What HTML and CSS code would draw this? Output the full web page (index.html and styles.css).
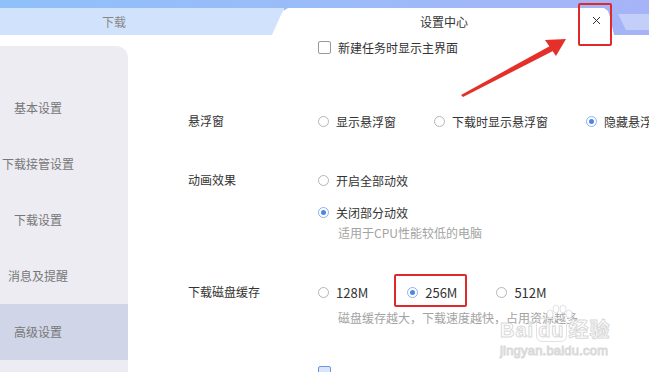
FILE: index.html
```html
<!DOCTYPE html>
<html lang="zh-cn">
<head>
    <meta charset="UTF-8">
    <title>设置中心</title>
    <link rel="stylesheet" href="styles.css">
</head>
<body>
    <div class="titlebar">
        <div class="tab tab-off">下载</div>
        <div class="tab tab-on">
            <span class="tab-title">设置中心</span>
            <span class="btn-close">
                <svg width="9" height="9" viewBox="0 0 9 9"><path d="M1 1L8 8M8 1L1 8" stroke="#333" stroke-width="1"/></svg>
            </span>
        </div>
        <div class="tab tab-next"></div>
    </div>

    <div class="page">
        <div class="sidebar">
            <div class="menu-item">基本设置</div>
            <div class="menu-item">下载接管设置</div>
            <div class="menu-item">下载设置</div>
            <div class="menu-item">消息及提醒</div>
            <div class="menu-item active">高级设置</div>
        </div>

        <div class="main">
            <div class="line line-top">
                <span class="check"></span>
                <span>新建任务时显示主界面</span>
            </div>

            <div class="row row-float">
                <div class="label">悬浮窗</div>
                <div class="options">
                    <div class="line">
                        <span class="opt"><span class="radio"></span>显示悬浮窗</span>
                        <span class="opt"><span class="radio"></span>下载时显示悬浮窗</span>
                        <span class="opt"><span class="radio on"></span>隐藏悬浮窗</span>
                    </div>
                </div>
            </div>

            <div class="row row-anim">
                <div class="label">动画效果</div>
                <div class="options">
                    <div class="line">
                        <span class="opt"><span class="radio"></span>开启全部动效</span>
                    </div>
                    <div class="line line-second">
                        <span class="opt"><span class="radio on"></span>关闭部分动效</span>
                    </div>
                    <div class="hint">适用于CPU性能较低的电脑</div>
                </div>
            </div>

            <div class="row row-cache">
                <div class="label">下载磁盘缓存</div>
                <div class="options">
                    <div class="line line-num">
                        <span class="opt"><span class="radio"></span>128M</span>
                        <span class="opt"><span class="radio on"></span>256M</span>
                        <span class="opt"><span class="radio"></span>512M</span>
                    </div>
                    <div class="hint hint-cache">磁盘缓存越大，下载速度越快，占用资源越多</div>
                </div>
            </div>

            <div class="row row-last">
                <div class="label"></div>
                <div class="options">
                    <div class="line"><span class="check on"></span></div>
                </div>
            </div>
        </div>
    </div>

    <!-- 百度经验水印 -->
    <div class="watermark">
        <svg class="wm-paw" width="30" height="16" viewBox="0 0 30 16">
            <g fill="#fff" stroke="#e2e2e2" stroke-width="1">
                <ellipse cx="6" cy="10" rx="3" ry="4"/>
                <ellipse cx="12" cy="5" rx="3" ry="4"/>
                <ellipse cx="19" cy="5" rx="3" ry="4"/>
                <ellipse cx="25" cy="10" rx="3" ry="4"/>
            </g>
        </svg>
        <div class="wm-logo">Bai<span class="wm-du">du</span>经验</div>
        <div class="wm-url">jingyan.baidu.com</div>
    </div>

    <!-- 红色标注 -->
    <div class="mark mark-close"></div>
    <div class="mark mark-256"></div>
    <svg class="arrow" width="649" height="372" viewBox="0 0 649 372">
        <path d="M461 95 L550 46 L553 51 L463 97 Z" fill="#e5302a"/>
        <path d="M566 39 L545 40 L556 56 Z" fill="#e5302a"/>
    </svg>
</body>
</html>
```

FILE: styles.css
```css
* {
    box-sizing: border-box;
}

body {
    margin: 0;
    width: 649px;
    height: 372px;
    overflow: hidden;
    position: relative;
    background-color: #fff;
    font-family: "Noto Sans CJK SC", "Liberation Sans", sans-serif;
    font-size: 12px;
    color: #333;
}

.titlebar {
    height: 35px;
    padding-top: 8px;
    display: flex;
    align-items: stretch;
    overflow: hidden;
    background: linear-gradient(90deg, #8fc0fa 0%, #9bbcf9 50%, #a6b3f7 100%);
}

.tab {
    display: flex;
    align-items: center;
    flex-shrink: 0;
    line-height: 27px;
}

.tab-off {
    width: 284px;
    padding-right: 56px;
    justify-content: center;
    background-color: #d1e3fc;
    color: #888;
}

.tab-on {
    width: 342px;
    margin-left: -12px;
    position: relative;
    justify-content: center;
    background-color: #fff;
    clip-path: polygon(0 100%, 8px 9px, 11px 3px, 16px 0, calc(100% - 10px) 0, calc(100% - 6px) 3px, calc(100% - 4px) 9px, 100% 100%);
}

.tab-title {
    margin-left: 2px;
}

.btn-close {
    position: absolute;
    right: 13px;
    top: 8px;
    width: 9px;
    height: 9px;
    display: flex;
}

.tab-next {
    width: 40px;
    margin: 6px 0 5px 4px;
    background-color: #c4cff9;
    clip-path: polygon(0 0, 100% 0, 100% 100%, 8px 100%);
}

.page {
    display: flex;
    height: 337px;
}

.sidebar {
    width: 128px;
    margin-top: 11px;
    padding-top: 34px;
    background-color: #ececf2;
    border-top-right-radius: 12px;
}

.menu-item {
    width: 76px;
    height: 56px;
    line-height: 56px;
    text-align: center;
    color: #777;
}

.menu-item.active {
    width: 128px;
    padding-right: 52px;
    background-color: #d0d5e7;
}

.main {
    flex: 1;
    padding-left: 60px;
}

.line {
    display: flex;
    align-items: center;
    height: 20px;
    white-space: nowrap;
}

.line-top {
    margin-top: 2px;
    padding-left: 130px;
}

.line-second {
    margin-top: 12px;
}

.line-num {
    font-size: 13px;
}

.line-num .opt {
    margin-right: 39px;
}

.check {
    width: 13px;
    height: 13px;
    margin-right: 7px;
    border: 1px solid #999;
    border-radius: 2px;
    background-color: #fff;
}

.check.on {
    border-color: #6a96e6;
    background-color: #d9e5fb;
}

.row {
    display: flex;
}

.row-float {
    margin-top: 54px;
}

.row-anim {
    margin-top: 39px;
}

.row-cache {
    margin-top: 39px;
}

.row-last {
    margin-top: 34px;
}

.label {
    width: 130px;
    flex-shrink: 0;
    line-height: 20px;
    color: #333;
}

.options {
    flex: 1;
}

.opt {
    display: flex;
    align-items: center;
    margin-right: 38px;
}

.radio {
    width: 11px;
    height: 11px;
    margin-right: 7px;
    border: 1px solid #b5b5b5;
    border-radius: 50%;
    position: relative;
}

.radio.on {
    border-color: #8fb0ee;
}

.radio.on::after {
    content: "";
    position: absolute;
    left: 2px;
    top: 2px;
    width: 5px;
    height: 5px;
    border-radius: 50%;
    background-color: #4d86e6;
}

.hint {
    padding-left: 20px;
    line-height: 20px;
    color: #a3a3a3;
    margin-top: 1px;
}

.hint-cache {
    margin-top: 6px;
}

.watermark {
    position: absolute;
    left: 500px;
    top: 304px;
    width: 115px;
    color: #fff;
    -webkit-text-stroke: 1px #d9d9d9;
    font-family: "Liberation Sans", "Noto Sans CJK SC", sans-serif;
    font-weight: bold;
    line-height: 1;
}

.wm-paw {
    display: block;
    margin-left: 44px;
}

.wm-logo {
    font-size: 20px;
    letter-spacing: 1px;
}

.wm-du {
    margin: 0 2px;
    padding: 0 1px;
    border: 1px solid #e2e2e2;
    border-radius: 6px;
}

.wm-url {
    margin-top: 4px;
    font-size: 13px;
    font-weight: normal;
    letter-spacing: 0.2px;
}

.mark {
    position: absolute;
    border: 2.5px solid #e0292b;
    border-radius: 2px;
}

.mark-close {
    left: 578px;
    top: 3px;
    width: 34px;
    height: 43px;
}

.mark-256 {
    left: 394px;
    top: 274px;
    width: 73px;
    height: 33px;
}

.arrow {
    position: absolute;
    left: 0;
    top: 0;
}
```
